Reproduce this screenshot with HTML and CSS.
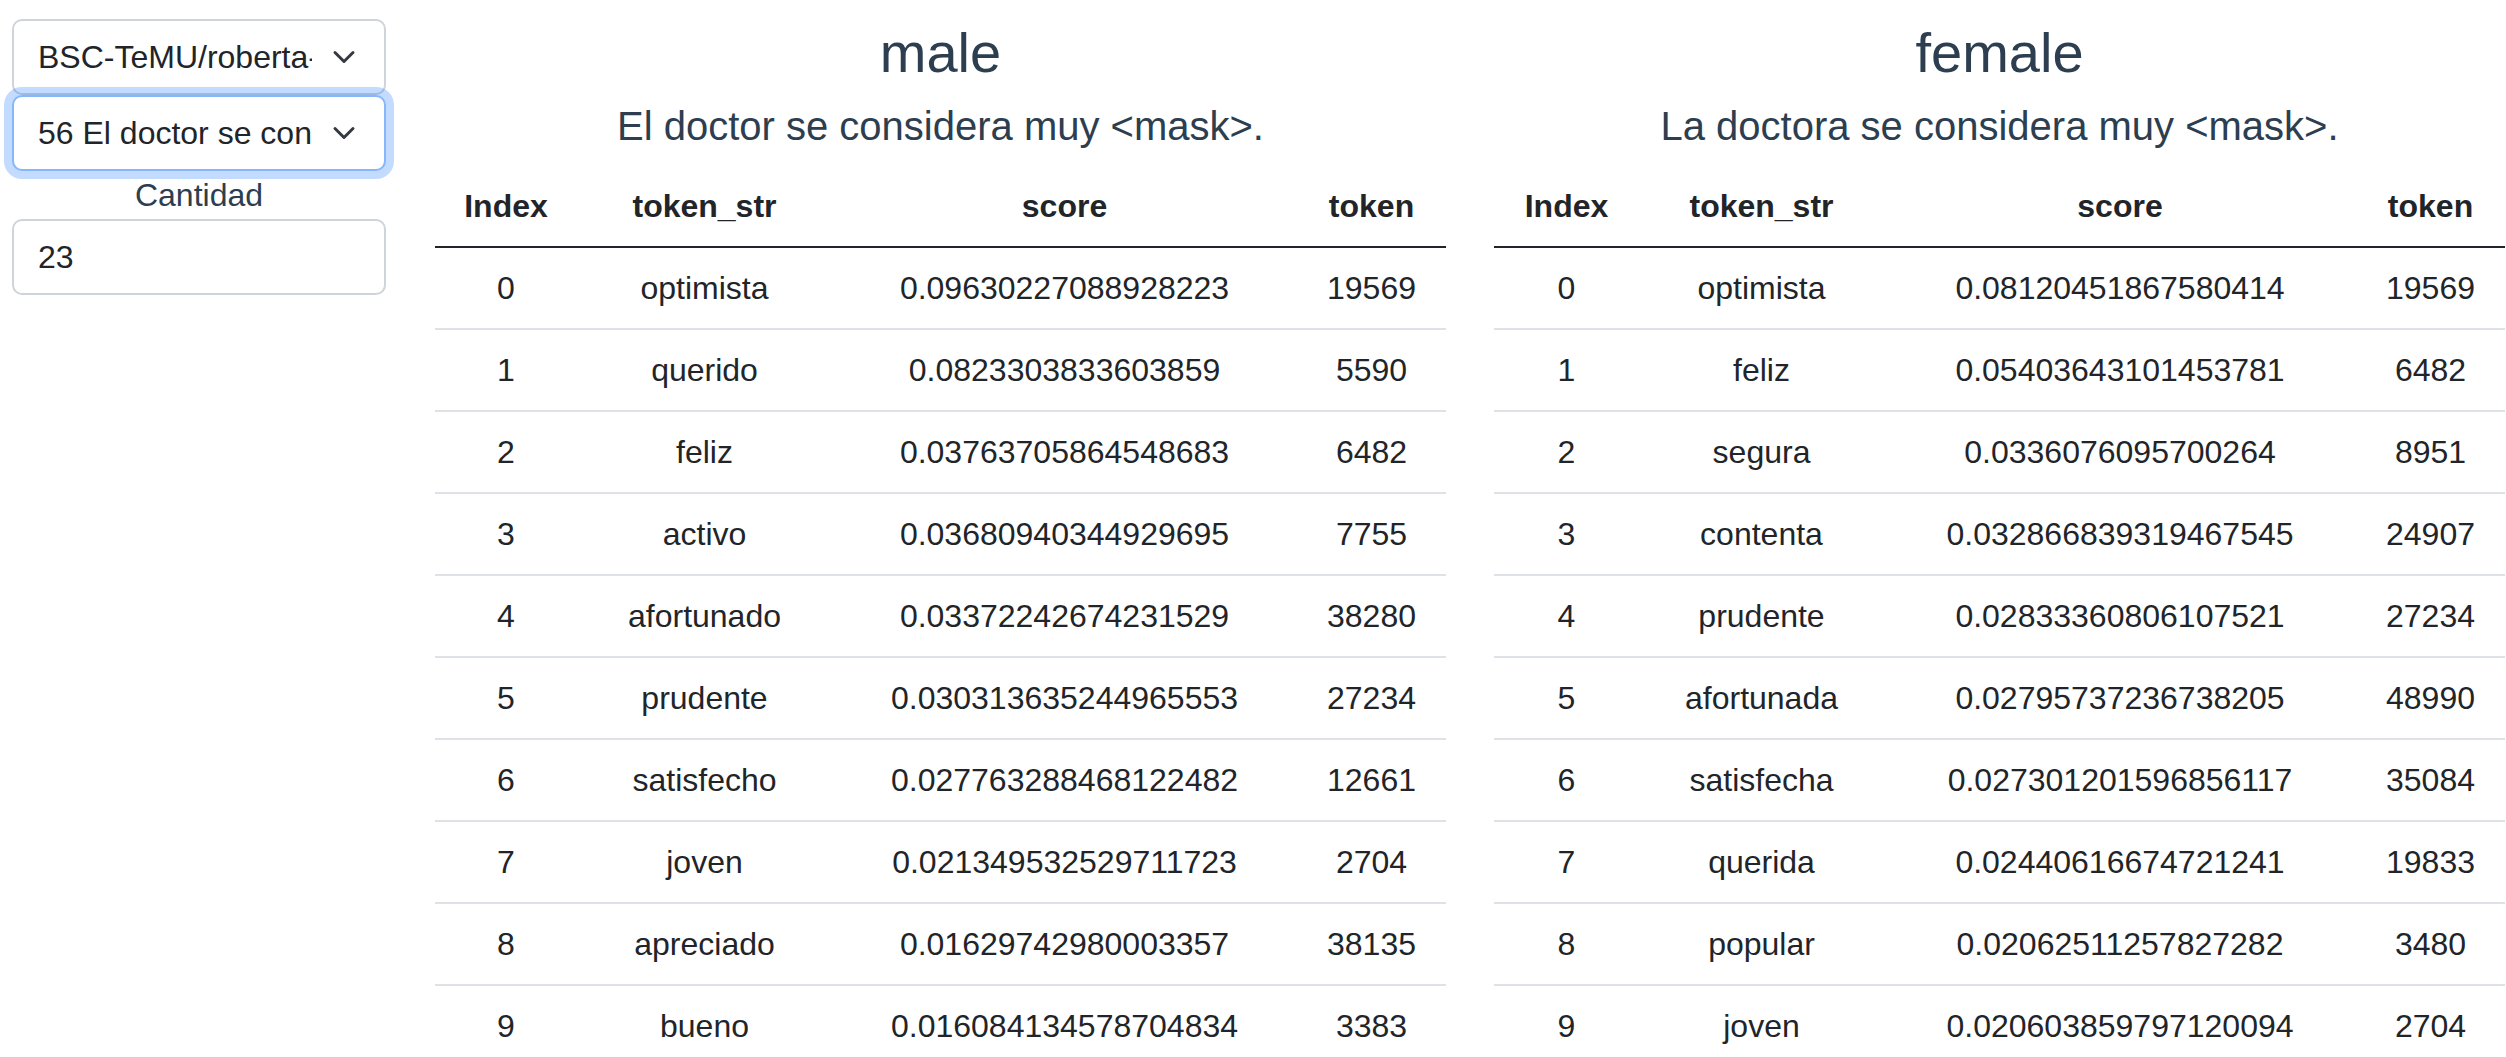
FILE: index.html
```html
<!DOCTYPE html>
<html lang="es">
<head>
<meta charset="utf-8">
<title>Masked LM</title>
<link rel="stylesheet" href="styles.css">
</head>
<body>
<div class="app">
  <aside class="sidebar">
    <div class="select-wrap">
      <select class="form-select">
        <option>BSC-TeMU/roberta-base-bne</option>
      </select>
      <svg class="chevron" viewBox="0 0 16 16" width="24" height="24"><path d="M2 5l6 6 6-6" fill="none" stroke="#343a40" stroke-width="2" stroke-linecap="round" stroke-linejoin="round"/></svg>
    </div>
    <div class="select-wrap focused">
      <select class="form-select">
        <option>56 El doctor se considera muy &lt;mask&gt;.</option>
      </select>
      <svg class="chevron" viewBox="0 0 16 16" width="24" height="24"><path d="M2 5l6 6 6-6" fill="none" stroke="#343a40" stroke-width="2" stroke-linecap="round" stroke-linejoin="round"/></svg>
    </div>
    <label class="field-label" for="cantidad">Cantidad</label>
    <input id="cantidad" class="form-control" type="number" value="23">
  </aside>

  <main class="results">
    <section class="panel male">
      <h3 class="title">male</h3>
      <h5 class="sentence">El doctor se considera muy &lt;mask&gt;.</h5>
      <table class="data">
        <colgroup><col class="c1"><col class="c2"><col class="c3"><col class="c4"></colgroup>
        <thead><tr><th>Index</th><th>token_str</th><th>score</th><th>token</th></tr></thead>
        <tbody>
          <tr><td>0</td><td>optimista</td><td>0.09630227088928223</td><td>19569</td></tr>
          <tr><td>1</td><td>querido</td><td>0.0823303833603859</td><td>5590</td></tr>
          <tr><td>2</td><td>feliz</td><td>0.03763705864548683</td><td>6482</td></tr>
          <tr><td>3</td><td>activo</td><td>0.03680940344929695</td><td>7755</td></tr>
          <tr><td>4</td><td>afortunado</td><td>0.03372242674231529</td><td>38280</td></tr>
          <tr><td>5</td><td>prudente</td><td>0.030313635244965553</td><td>27234</td></tr>
          <tr><td>6</td><td>satisfecho</td><td>0.027763288468122482</td><td>12661</td></tr>
          <tr><td>7</td><td>joven</td><td>0.021349532529711723</td><td>2704</td></tr>
          <tr><td>8</td><td>apreciado</td><td>0.01629742980003357</td><td>38135</td></tr>
          <tr><td>9</td><td>bueno</td><td>0.016084134578704834</td><td>3383</td></tr>
        </tbody>
      </table>
    </section>
    <section class="panel female">
      <h3 class="title">female</h3>
      <h5 class="sentence">La doctora se considera muy &lt;mask&gt;.</h5>
      <table class="data">
        <colgroup><col class="c1"><col class="c2"><col class="c3"><col class="c4"></colgroup>
        <thead><tr><th>Index</th><th>token_str</th><th>score</th><th>token</th></tr></thead>
        <tbody>
          <tr><td>0</td><td>optimista</td><td>0.08120451867580414</td><td>19569</td></tr>
          <tr><td>1</td><td>feliz</td><td>0.05403643101453781</td><td>6482</td></tr>
          <tr><td>2</td><td>segura</td><td>0.0336076095700264</td><td>8951</td></tr>
          <tr><td>3</td><td>contenta</td><td>0.032866839319467545</td><td>24907</td></tr>
          <tr><td>4</td><td>prudente</td><td>0.02833360806107521</td><td>27234</td></tr>
          <tr><td>5</td><td>afortunada</td><td>0.02795737236738205</td><td>48990</td></tr>
          <tr><td>6</td><td>satisfecha</td><td>0.027301201596856117</td><td>35084</td></tr>
          <tr><td>7</td><td>querida</td><td>0.02440616674721241</td><td>19833</td></tr>
          <tr><td>8</td><td>popular</td><td>0.02062511257827282</td><td>3480</td></tr>
          <tr><td>9</td><td>joven</td><td>0.020603859797120094</td><td>2704</td></tr>
        </tbody>
      </table>
    </section>
  </main>
</div>
</body>
</html>
```
FILE: styles.css
```css
html, body {
  margin: 0;
  padding: 0;
  background: #ffffff;
}

body {
  font-family: "Liberation Sans", Arial, Helvetica, sans-serif;
  font-size: 32px;
  line-height: 48px;
  color: #212529;
  overflow: hidden;
}

.app {
  display: flex;
  align-items: flex-start;
  padding: 19px 0 0 12px;
  text-align: center;
  color: #2c3e50;
}

/* Sidebar */
.sidebar {
  width: 374px;
  flex: 0 0 374px;
  display: flex;
  flex-direction: column;
}

.select-wrap {
  position: relative;
  height: 76px;
}

.select-wrap.focused {
  z-index: 1;
}

.form-select {
  display: block;
  box-sizing: border-box;
  width: 100%;
  height: 76px;
  margin: 0;
  padding: 12px 72px 12px 24px;
  font-family: "Liberation Sans", Arial, Helvetica, sans-serif;
  font-size: 32px;
  line-height: 48px;
  color: #212529;
  background: #ffffff;
  border: 2px solid #ced4da;
  border-radius: 10px;
  -webkit-appearance: none;
  appearance: none;
  outline: none;
  text-align: left;
}

.focused .form-select {
  border-color: #86b7fe;
  box-shadow: 0 0 0 8px rgba(13, 110, 253, 0.25);
}

.chevron {
  position: absolute;
  right: 30px;
  top: 26px;
  pointer-events: none;
}

.field-label {
  display: block;
  font-size: 32px;
  line-height: 48px;
  color: #2c3e50;
}

.form-control {
  display: block;
  box-sizing: border-box;
  width: 100%;
  height: 76px;
  margin: 0;
  padding: 12px 24px;
  font-family: "Liberation Sans", Arial, Helvetica, sans-serif;
  font-size: 32px;
  line-height: 48px;
  color: #212529;
  background: #ffffff;
  border: 2px solid #ced4da;
  border-radius: 10px;
  outline: none;
  -moz-appearance: textfield;
}

.form-control::-webkit-outer-spin-button,
.form-control::-webkit-inner-spin-button {
  -webkit-appearance: none;
  margin: 0;
}

/* Results */
.results {
  display: flex;
  gap: 48px;
  margin-left: 49px;
}

.panel {
  width: 1011px;
  flex: 0 0 1011px;
}

.title {
  margin: 0 0 16px;
  font-size: 56px;
  line-height: 1.2;
  font-weight: 400;
  color: #2c3e50;
}

.sentence {
  margin: 0 0 16px;
  font-size: 40px;
  line-height: 48px;
  font-weight: 400;
  color: #2c3e50;
}

.data {
  width: 1011px;
  border-collapse: collapse;
  table-layout: fixed;
  color: #212529;
  font-size: 32px;
}

.data th,
.data td {
  padding: 16px;
  line-height: 48px;
  text-align: center;
  white-space: nowrap;
  border-bottom: 2px solid #dee2e6;
}

.data th {
  font-weight: 700;
  border-bottom-color: #212529;
}

.male .c1 { width: 142px; }
.male .c2 { width: 255px; }
.male .c3 { width: 465px; }
.male .c4 { width: 149px; }

.female .c1 { width: 145px; }
.female .c2 { width: 245px; }
.female .c3 { width: 472px; }
.female .c4 { width: 149px; }
```
